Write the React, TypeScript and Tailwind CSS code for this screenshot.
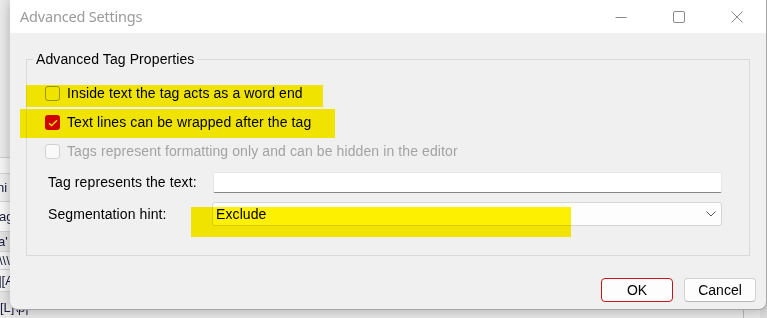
import React from 'react';

const Checkbox = ({ state }: { state: 'off' | 'on' | 'disabled' }) => {
  if (state === 'on') {
    return (
      <span className="w-[15px] h-[15px] rounded-[3px] bg-[#d10000] flex items-center justify-center shrink-0">
        <svg width="10" height="8" viewBox="0 0 10 8" fill="none">
          <path d="M1 4.2l2.6 2.4L9 1.2" stroke="#ffffff" strokeWidth="1.3" />
        </svg>
      </span>
    );
  }
  if (state === 'disabled') {
    return <span className="w-[15px] h-[15px] rounded-[3px] bg-[#f9f9f9] border border-[#d2d2d2] shrink-0" />;
  }
  return <span className="w-[15px] h-[15px] rounded-[3px] border border-[#9c9c9c] shrink-0" />;
};

const BackRow = ({ text, className }: { text: string; className: string }) => (
  <div className={`flex items-center border-b border-[#d4d4d4] text-[13px] text-[#1c1c3c] whitespace-nowrap ${className}`}>
    {text}
  </div>
);

export default function App() {
  return (
    <div className="w-[767px] h-[318px] relative overflow-hidden bg-[#dcdcdc] font-['Liberation_Sans',Arial,sans-serif]">
      {/* application window behind the dialog */}
      <div className="absolute left-0 top-0 w-[760px] h-[318px] flex flex-col bg-[#ededed]">
        <div className="h-[158px] bg-[#ececec] border-b border-[#d0d0d0]" />
        <div className="h-[16px] bg-[#f7f7f7] border-b border-[#d4d4d4]" />
        <BackRow text="ni" className="h-[28px] bg-[#f0f0f0] -ml-[3px]" />
        <BackRow text="ag" className="h-[30px] bg-[#fafafa] -ml-[1px]" />
        <BackRow text="a'" className="h-[20px] bg-[#e6e6e6] -ml-[2px]" />
        <BackRow text="\\\\" className="h-[18px] bg-[#f6f6f6] -ml-[1px]" />
        <BackRow text="][A" className="h-[22px] bg-[#f6f6f6] -ml-[2px]" />
        <div className="h-[26px] flex items-end pb-[1px] bg-[#e8e8e8] text-[13px] text-[#1c1c3c] whitespace-nowrap">
          [L]\p|
        </div>
        <div className="absolute left-[743px] top-[300px] w-px h-[18px] bg-[#b8b8b8]" />
      </div>

      {/* dialog window */}
      <div className="absolute left-[10px] top-0 w-[757px] h-[310px] bg-[#f0f0f0] rounded-b-[8px] border-r border-b border-[#a6a6a6] shadow-[0_0_14px_rgba(0,0,0,0.28)] flex flex-col">
        <div className="h-[33px] bg-white flex items-center">
          <span className="pl-[10px] text-[14.5px] text-[#9a9a9a] font-['Noto_Sans',sans-serif] tracking-[-0.2px]">
            Advanced Settings
          </span>
          <div className="ml-auto flex h-full">
            <div className="w-[58px] flex items-center justify-center">
              <svg width="12" height="12" viewBox="0 0 12 12">
                <path d="M0.5 6.5h11" stroke="#8a8a8a" strokeWidth="1" />
              </svg>
            </div>
            <div className="w-[58px] flex items-center justify-center">
              <svg width="12" height="12" viewBox="0 0 12 12" fill="none">
                <rect x="0.5" y="0.5" width="11" height="11" rx="1.5" stroke="#8a8a8a" />
              </svg>
            </div>
            <div className="w-[58px] flex items-center justify-center">
              <svg width="12" height="12" viewBox="0 0 12 12" fill="none">
                <path d="M0.5 0.5l11 11M11.5 0.5l-11 11" stroke="#8a8a8a" strokeWidth="1" />
              </svg>
            </div>
          </div>
        </div>

        <div className="flex-1 flex flex-col pt-[26px] pl-[16px] pr-[16px]">
          <div className="relative h-[197px] border border-[#dadada] flex flex-col pt-[19px] text-[14px] tracking-[0.1px]">
            <span className="absolute -top-[9px] left-[6px] px-[3px] bg-[#f0f0f0] text-black leading-[16px]">
              Advanced Tag Properties
            </span>
            <div className="h-[29px] flex items-center pl-[18px]">
              <Checkbox state="off" />
              <span className="ml-[7px] text-black">Inside text the tag acts as a word end</span>
            </div>
            <div className="h-[29px] flex items-center pl-[18px]">
              <Checkbox state="on" />
              <span className="ml-[7px] text-black">Text lines can be wrapped after the tag</span>
            </div>
            <div className="h-[29px] flex items-center pl-[18px]">
              <Checkbox state="disabled" />
              <span className="ml-[7px] text-[#a3a3a3]">Tags represent formatting only and can be hidden in the editor</span>
            </div>
            <div className="mt-[6px] h-[21px] flex items-center pl-[21px] pr-[27px]">
              <span className="w-[165px] text-black">Tag represents the text:</span>
              <div className="flex-1 h-full bg-white border border-[#e6e6e6] border-b-[#858585] rounded-[2px]" />
            </div>
            <div className="mt-[9px] h-[24px] flex items-center pl-[21px] pr-[27px]">
              <span className="w-[164px] text-black">Segmentation hint:</span>
              <div className="flex-1 h-full bg-[#fdfdfd] border border-[#d6d6d6] rounded-[3px] flex items-center pl-[3px] pr-[5px]">
                <span className="text-black">Exclude</span>
                <svg className="ml-auto" width="10" height="6" viewBox="0 0 10 6" fill="none">
                  <path d="M0.5 0.5l4.5 4.5 4.5-4.5" stroke="#555" strokeWidth="1" />
                </svg>
              </div>
            </div>
          </div>

          <div className="mt-[22px] flex justify-end gap-[11px] -mr-[6px] text-[14px]">
            <button className="w-[72px] h-[24px] rounded-[4px] bg-[#fdfdfd] border border-[#c4151c] text-black">OK</button>
            <button className="w-[72px] h-[24px] rounded-[4px] bg-[#fdfdfd] border border-[#d2d2d2] border-b-[#b8b8b8] text-black">Cancel</button>
          </div>
        </div>
      </div>

      {/* highlighter marks */}
      <div className="absolute left-[26px] top-[85px] w-[297px] h-[22px] bg-[#fff200] mix-blend-multiply" />
      <div className="absolute left-[20px] top-[109px] w-[315px] h-[29px] bg-[#fff200] mix-blend-multiply" />
      <div className="absolute left-[191px] top-[207px] w-[380px] h-[30px] bg-[#fff200] mix-blend-multiply" />
    </div>
  );
}
